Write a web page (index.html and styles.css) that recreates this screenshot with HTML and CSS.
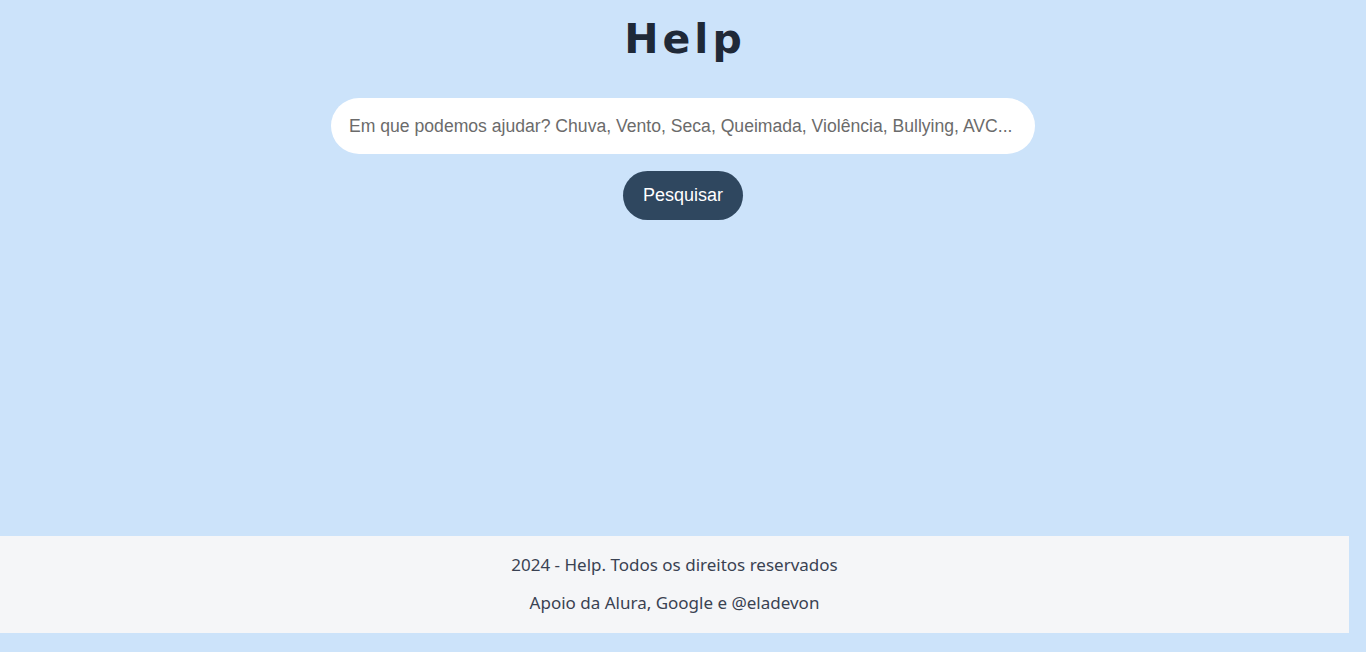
FILE: index.html
```html
<!DOCTYPE html>
<html lang="pt-BR">
<head>
<meta charset="utf-8">
<title>Help</title>
<link rel="stylesheet" href="styles.css">
</head>
<body>
<main class="main">
  <h1 class="title">Help</h1>
  <input class="search" type="text" placeholder="Em que podemos ajudar? Chuva, Vento, Seca, Queimada, Violência, Bullying, AVC...">
  <button class="btn">Pesquisar</button>
</main>
<footer class="footer">
  <p class="footer-text">2024 - Help. Todos os direitos reservados</p>
  <p class="footer-text">Apoio da Alura, Google e @eladevon</p>
</footer>
</body>
</html>
```
FILE: styles.css
```css
html, body {
  margin: 0;
  padding: 0;
}
body {
  background: #cce3fa;
  font-family: "Liberation Sans", Arial, sans-serif;
  padding-bottom: 19px;
}
.main {
  height: 536px;
  display: flex;
  flex-direction: column;
  align-items: center;
}
.title {
  margin: 14px 0 0 0;
  height: 59px;
  font-family: "DejaVu Sans", sans-serif;
  font-weight: bold;
  font-size: 41px;
  line-height: 50px;
  letter-spacing: 4px;
  padding-left: 4px;
  color: #1f2937;
}
.search {
  margin-top: 25px;
  width: 704px;
  height: 56px;
  box-sizing: border-box;
  border: none;
  outline: none;
  border-radius: 28px;
  background: #ffffff;
  padding: 0 16px 0 18px;
  font-family: "Liberation Sans", Arial, sans-serif;
  font-size: 17.6px;
  color: #333;
}
.search::placeholder {
  color: #6b6b6b;
}
.btn {
  margin-top: 17px;
  width: 120px;
  height: 49px;
  border: none;
  border-radius: 25px;
  background: #2f475f;
  color: #ffffff;
  font-family: "Liberation Sans", Arial, sans-serif;
  font-size: 18px;
}
.footer {
  width: 1349px;
  height: 97px;
  box-sizing: border-box;
  background: #f5f6f8;
  padding-top: 18px;
  text-align: center;
}
.footer-text {
  margin: 0 0 16px 0;
  font-family: "Noto Sans", sans-serif;
  font-size: 17px;
  line-height: 22px;
  color: #3a4252;
}
```
